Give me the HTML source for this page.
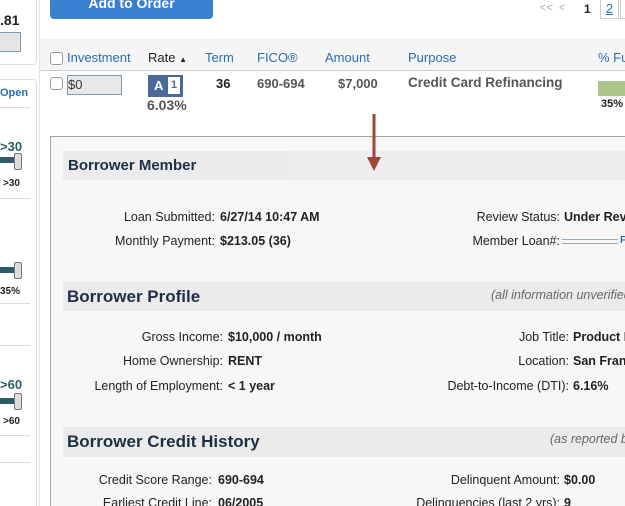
<!DOCTYPE html><html style="overflow:hidden;height:506px"><head><style>
html,body{margin:0;width:625px;height:506px;overflow:hidden}
body{background:#fff;font-family:"Liberation Sans",Arial,sans-serif;position:relative;font-size:13px;color:#222}
.a{position:absolute;white-space:nowrap}
.lbl{position:absolute;text-align:right;white-space:nowrap;color:#222;font-size:12.5px}
.val{position:absolute;white-space:nowrap;font-weight:bold;font-size:12.5px;color:#222}
.hd{position:absolute;left:63px;right:0;background:#ebebeb;font-weight:bold;color:#1d2f45}
.hd span{white-space:nowrap}
.hl{position:absolute;left:0;width:30px;height:1px;background:#ddd}
.sl{position:absolute;left:0;width:16px;height:6px;background:#2c5d66}
.kn{position:absolute;left:14px;width:6px;height:15px;background:#ddd;border:1px solid #777;border-radius:2px}
</style></head><body>
<div class="a" style="left:-10px;top:-5px;width:45px;height:68px;border:1px solid #ddd;border-radius:4px"></div>
<div class="a" style="left:0;top:12px;font-weight:bold;font-size:14px">.81</div>
<div class="a" style="left:-3px;top:32px;width:22px;height:18px;background:#e5e5e5;border:1px solid #7f9cb5"></div>
<div class="a" style="left:-10px;top:79px;width:45px;height:440px;border:1px solid #ddd;border-radius:4px"></div>
<div class="a" style="left:0;top:87px;color:#2a6eb5;font-weight:bold;font-size:11px">Open</div>
<div class="hl" style="top:107px"></div>
<div class="a" style="left:0;top:139px;color:#2c5d66;font-weight:bold;font-size:13px">&gt;30</div>
<div class="sl" style="top:157px"></div><div class="kn" style="top:153px"></div>
<div class="a" style="left:3px;top:178px;font-weight:bold;font-size:10px">&gt;30</div>
<div class="hl" style="top:198px"></div>
<div class="sl" style="top:267px"></div><div class="kn" style="top:262px"></div>
<div class="a" style="left:0;top:286px;font-weight:bold;font-size:10px">35%</div>
<div class="hl" style="top:303px"></div><div class="hl" style="top:345px"></div>
<div class="a" style="left:0;top:377px;color:#2c5d66;font-weight:bold;font-size:13px">&gt;60</div>
<div class="sl" style="top:398px"></div><div class="kn" style="top:393px"></div>
<div class="a" style="left:3px;top:416px;font-weight:bold;font-size:10px">&gt;60</div>
<div class="hl" style="top:435px"></div><div class="hl" style="top:462px"></div>
<div class="a" style="left:39px;top:0;width:1px;height:506px;background:#e3e3e3"></div>
<div class="a" style="left:50px;top:-12px;width:163px;height:31px;background:#3a7fd0;border-radius:0 0 4px 4px;color:#fff;font-weight:bold;font-size:14px;text-align:center;line-height:30px">Add to Order</div>
<div class="a" style="left:540px;top:2px;color:#aaa;font-size:11px">&lt;&lt;&nbsp;&nbsp;&lt;</div>
<div class="a" style="left:584px;top:2px;font-weight:bold;font-size:12px">1</div>
<div class="a" style="left:600px;top:-2px;width:17px;height:19px;border:1px solid #ccc;color:#2a6eb5;text-decoration:underline;text-align:center;line-height:19px">2</div>
<div class="a" style="left:620px;top:-2px;width:10px;height:19px;border:1px solid #ccc"></div>
<div class="a" style="left:40px;top:38px;width:585px;height:32px;background:#f5f5f5;border-bottom:1px solid #ccc"></div>
<div class="a" style="left:50px;top:52px;width:11px;height:11px;border:1px solid #999;border-radius:3px;background:#fff"></div>
<div class="a" style="left:67px;top:50px;color:#2a6eb5">Investment</div>
<div class="a" style="left:148px;top:50px">Rate <span style="font-size:8px">▲</span></div>
<div class="a" style="left:205px;top:50px;color:#2a6eb5">Term</div>
<div class="a" style="left:257px;top:50px;color:#2a6eb5">FICO®</div>
<div class="a" style="left:325px;top:50px;color:#2a6eb5">Amount</div>
<div class="a" style="left:408px;top:50px;color:#2a6eb5">Purpose</div>
<div class="a" style="left:598px;top:50px;color:#2a6eb5">% Fu</div>
<div class="a" style="left:50px;top:77px;width:11px;height:11px;border:1px solid #999;border-radius:3px;background:#fff"></div>
<div class="a" style="left:67px;top:75px;width:53px;height:18px;border:1px solid #7f9cb5;background:#e8e8e8;line-height:18px;font-size:13px;color:#333">$0</div>
<div class="a" style="left:148px;top:75px;width:33px;height:20px;background:#4a6a9a;border:1px solid #4a6a9a"></div>
<div class="a" style="left:154px;top:78px;color:#fff;font-weight:bold;font-size:13px">A</div>
<div class="a" style="left:168px;top:77px;width:12px;height:17px;background:#fff;color:#4a6a9a;font-weight:bold;text-align:center;line-height:17px;font-size:11px">1</div>
<div class="a" style="left:147px;top:97px;color:#555;font-weight:bold;font-size:14px">6.03%</div>
<div class="a" style="left:216px;top:76px;font-weight:bold">36</div>
<div class="a" style="left:257px;top:76px;font-weight:bold;color:#555">690-694</div>
<div class="a" style="left:338px;top:76px;font-weight:bold;color:#555">$7,000</div>
<div class="a" style="left:408px;top:75px;font-weight:bold;color:#555;font-size:13.5px">Credit Card Refinancing</div>
<div class="a" style="left:598px;top:81px;width:30px;height:15px;background:#a9c587"></div>
<div class="a" style="left:601px;top:98px;font-weight:bold;font-size:11px">35%</div>
<div class="a" style="left:50px;top:136px;width:590px;height:380px;border:1px solid #a8a39e;background:#f8f7f5"></div>
<div class="hd" style="top:151px;height:29px;background:linear-gradient(90deg,#ebebeb 0,#ebebeb 225px,#eeeeee 225px)"><span style="position:absolute;left:5px;top:6px;font-size:15px">Borrower Member</span></div>
<svg class="a" style="left:367px;top:114px" width="14" height="58"><rect x="5.5" y="0" width="3" height="46" fill="#a0453a"/><polygon points="0,43 14,43 7,57" fill="#a0453a"/></svg>
<div class="lbl" style="right:410px;top:210px">Loan Submitted:</div><div class="val" style="left:220px;top:210px">6/27/14 10:47 AM</div>
<div class="lbl" style="right:410px;top:234px">Monthly Payment:</div><div class="val" style="left:220px;top:234px">$213.05 (36)</div>
<div class="lbl" style="right:65px;top:210px">Review Status:</div><div class="val" style="left:564px;top:210px">Under Revi</div>
<div class="lbl" style="right:65px;top:234px">Member Loan#:</div>
<div class="a" style="left:562px;top:239px;width:56px;height:3px;border-top:1px solid #9ab;border-bottom:1px solid #9ab"></div><div class="a" style="left:620px;top:235px;color:#2a6eb5;font-size:10px;font-weight:bold">F</div>
<div class="hd" style="top:282px;height:29px"><span style="position:absolute;left:4px;top:5px;font-size:17px">Borrower Profile</span><span style="position:absolute;left:428px;top:6px;font-weight:normal;font-style:italic;color:#666;font-size:12.5px">(all information unverified</span></div>
<div class="lbl" style="right:402px;top:330px">Gross Income:</div><div class="val" style="left:228px;top:330px">$10,000 / month</div>
<div class="lbl" style="right:402px;top:354px">Home Ownership:</div><div class="val" style="left:228px;top:354px">RENT</div>
<div class="lbl" style="right:402px;top:379px">Length of Employment:</div><div class="val" style="left:228px;top:379px">&lt; 1 year</div>
<div class="lbl" style="right:56px;top:330px">Job Title:</div><div class="val" style="left:573px;top:330px">Product L</div>
<div class="lbl" style="right:56px;top:354px">Location:</div><div class="val" style="left:573px;top:354px">San Franc</div>
<div class="lbl" style="right:56px;top:379px">Debt-to-Income (DTI):</div><div class="val" style="left:573px;top:379px">6.16%</div>
<div class="hd" style="top:427px;height:30px"><span style="position:absolute;left:4px;top:5px;font-size:17px">Borrower Credit History</span><span style="position:absolute;left:487px;top:5px;font-weight:normal;font-style:italic;color:#666;font-size:12.5px">(as reported b</span></div>
<div class="lbl" style="right:413px;top:473px">Credit Score Range:</div><div class="val" style="left:218px;top:473px">690-694</div>
<div class="lbl" style="right:413px;top:496px">Earliest Credit Line:</div><div class="val" style="left:218px;top:496px">06/2005</div>
<div class="lbl" style="right:65px;top:473px">Delinquent Amount:</div><div class="val" style="left:564px;top:473px">$0.00</div>
<div class="lbl" style="right:65px;top:496px">Delinquencies (last 2 yrs):</div><div class="val" style="left:564px;top:496px">9</div>
</body></html>
